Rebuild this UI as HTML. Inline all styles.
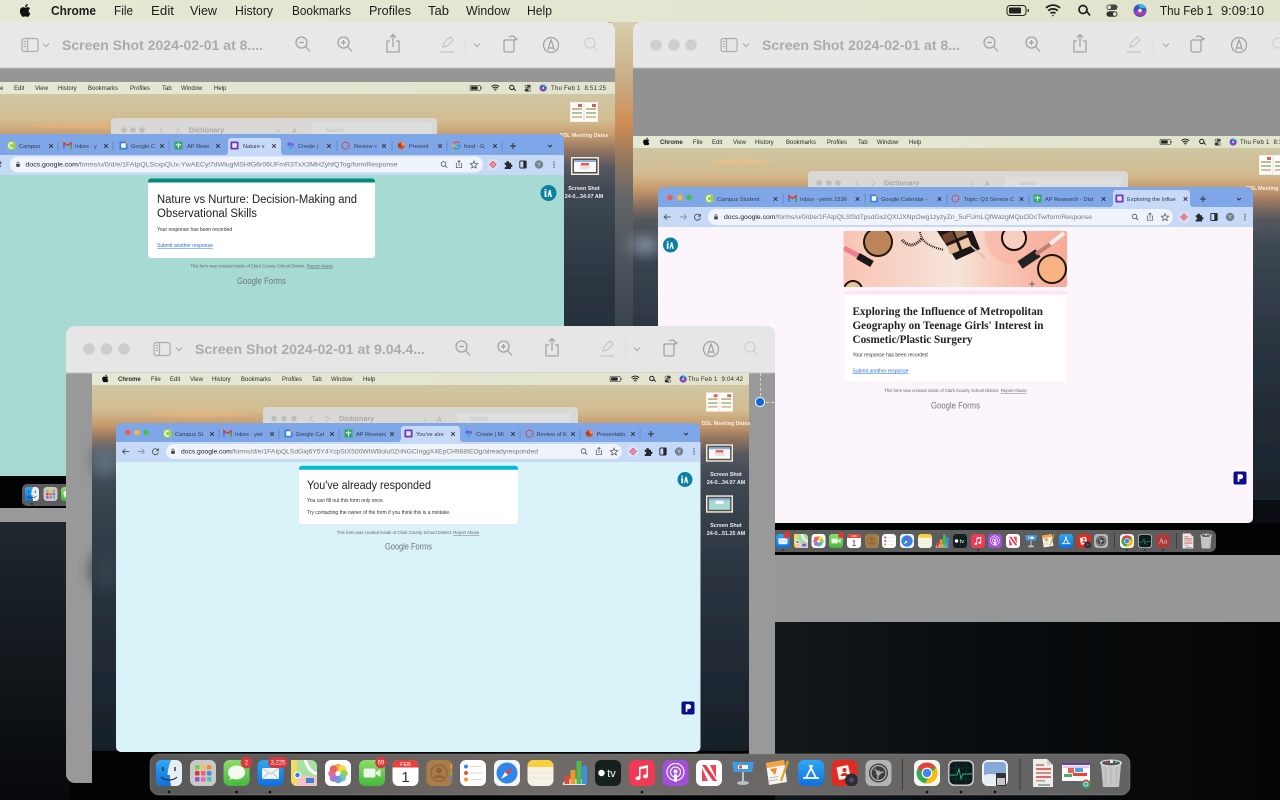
<!DOCTYPE html>
<html><head><meta charset="utf-8"><title>Screen</title>
<style>
html,body{margin:0;padding:0;background:#000;width:1280px;height:800px;overflow:hidden}
svg{display:block}
text{font-family:"Liberation Sans",Arial,sans-serif;white-space:pre}
.mb{font-size:13px;fill:#1d1d1b}
.pt{font-size:14px;font-weight:700;fill:#ababab}
.m{font-size:6px;fill:#2b2b2b}
.tb{font-size:5.7px;fill:#2e3b52}
.u{font-size:6.2px;fill:#777}
.ud{fill:#222}
.lbl{font-size:5.400px;font-weight:700;fill:#eee;text-anchor:middle}
.d{font-size:7.200px;font-weight:700;fill:#a8a8a4}
.p{font-size:5px;fill:#333}
.ft{font-size:4.300px;fill:#666;text-anchor:middle}
.gf{font-size:9.2px;fill:#70757a;text-anchor:middle}
.lnk{font-size:5px;fill:#2a6fe0;text-decoration:underline}
.bd{font-size:6px;fill:#fff;text-anchor:middle}
</style></head>
<body>
<svg width="1280" height="800" viewBox="0 0 1280 800" xmlns="http://www.w3.org/2000/svg">
<defs>
<filter id="b" x="-2%" y="-2%" width="104%" height="104%"><feGaussianBlur stdDeviation=".28"/></filter>
<filter id="bb" x="-50%" y="-50%" width="200%" height="200%"><feGaussianBlur stdDeviation="7"/></filter>
<linearGradient id="wp" x1="0" y1="0" x2="0" y2="1">
<stop offset="0" stop-color="#cfc7a3"/><stop offset=".07" stop-color="#d2bb90"/><stop offset=".11" stop-color="#c69a6b"/><stop offset=".15" stop-color="#8e7260"/><stop offset=".19" stop-color="#56585e"/><stop offset=".26" stop-color="#3e4853"/><stop offset=".5" stop-color="#2b3540"/><stop offset="1" stop-color="#171f27"/>
</linearGradient>
<linearGradient id="sl" x1="0" y1="22" x2="0" y2="326" gradientUnits="userSpaceOnUse">
<stop offset="0" stop-color="#d8cfad"/><stop offset=".2" stop-color="#c8ab82"/><stop offset=".33" stop-color="#d28e55"/><stop offset=".45" stop-color="#95785f"/><stop offset=".58" stop-color="#62656a"/><stop offset="1" stop-color="#3a444d"/>
</linearGradient>
<linearGradient id="bot" x1="0" y1="0" x2="0" y2="1"><stop offset="0" stop-color="#1f2830"/><stop offset=".5" stop-color="#12171c"/><stop offset="1" stop-color="#07090b"/></linearGradient>
<linearGradient id="low" x1="0" y1="0" x2="1" y2="0"><stop offset="0" stop-color="#12181b"/><stop offset=".35" stop-color="#0a0e10"/><stop offset="1" stop-color="#040506"/></linearGradient>
<linearGradient id="mbg" x1="0" y1="0" x2="1" y2="0"><stop offset="0" stop-color="#e5e8d4"/><stop offset="1" stop-color="#e1e3cc"/></linearGradient>
<linearGradient id="dk" x1="0" y1="0" x2="1" y2="0"><stop offset="0" stop-color="#585858"/><stop offset=".4" stop-color="#6e6a67"/><stop offset="1" stop-color="#636363"/></linearGradient>
<linearGradient id="blu" x1="0" y1="0" x2="0" y2="1"><stop offset="0" stop-color="#2ea8f5"/><stop offset="1" stop-color="#0f6fe0"/></linearGradient>
<linearGradient id="grn" x1="0" y1="0" x2="0" y2="1"><stop offset="0" stop-color="#8fdc6a"/><stop offset="1" stop-color="#45b83c"/></linearGradient>
<linearGradient id="bn" x1="0" y1="0" x2="1" y2="0"><stop offset="0" stop-color="#f8c4b3"/><stop offset=".5" stop-color="#f6e4da"/><stop offset=".7" stop-color="#f8c8b8"/><stop offset="1" stop-color="#f9a996"/></linearGradient>
<clipPath id="bnc"><rect x="843.5" y="231" width="223.5" height="56" rx="2"/></clipPath>

<symbol id="apple" viewBox="0 0 24 24"><path fill="#111" d="M17.05 12.54c-.03-2.6 2.12-3.85 2.22-3.91-1.21-1.77-3.09-2.01-3.76-2.04-1.6-.16-3.12.94-3.93.94-.81 0-2.06-.92-3.39-.89-1.74.03-3.35 1.01-4.25 2.57-1.81 3.14-.46 7.79 1.3 10.34.86 1.25 1.89 2.65 3.24 2.6 1.3-.05 1.79-.84 3.36-.84 1.57 0 2.01.84 3.38.81 1.4-.02 2.28-1.27 3.13-2.53.99-1.45 1.39-2.85 1.42-2.93-.03-.01-2.7-1.04-2.72-4.12zM14.5 4.9c.72-.87 1.2-2.08 1.07-3.29-1.03.04-2.28.69-3.02 1.55-.66.77-1.24 2-1.09 3.18 1.15.09 2.33-.58 3.04-1.44z"/></symbol>

<!-- preview toolbar icons, centred on 0,0 -->
<g id="p-side" fill="none" stroke="#adadad" stroke-width="1.2"><rect x="-8" y="-6.5" width="16" height="13" rx="2"/><path d="M-2.5-6.5v13M-6.3-3.5h2.2M-6.3-1h2.2M-6.3 1.5h2.2"/></g>
<path id="p-chev" d="M-3-1.5l3 3 3-3" fill="none" stroke="#adadad" stroke-width="1.2"/>
<g id="p-zo" fill="none" stroke="#a4a4a4" stroke-width="1.3"><circle cx="-1.5" cy="-1.5" r="5.5"/><path d="M2.5 2.5l4.5 5M-4-1.5h5"/></g>
<g id="p-zi" fill="none" stroke="#a4a4a4" stroke-width="1.3"><circle cx="-1.5" cy="-1.5" r="5.5"/><path d="M2.5 2.5l4.5 5M-4-1.5h5M-1.5-4v5"/></g>
<g id="p-share" fill="none" stroke="#a4a4a4" stroke-width="1.3"><path d="M-3-3h-3v11H6V-3H3M0 3V-9M-3-6.5l3-3 3 3"/></g>
<g id="p-pen" fill="none" stroke="#c6c6c6" stroke-width="1.2"><path d="M-4 3l1-4 6-6 3 3-6 6zM-7 8H7"/></g>
<g id="p-rot" fill="none" stroke="#a4a4a4" stroke-width="1.3"><rect x="-6" y="-4" width="10" height="12" rx="1.5"/><path d="M-1-7c3-2 6-1 7 3M6-4l-2-.5M6-4l1.500-1.800"/></g>
<g id="p-mk" fill="none" stroke="#a4a4a4" stroke-width="1.3"><circle r="7.5"/><path d="M-3 5l1.500-6L0-5l1.500 4L3 5M-2 3h4"/></g>
<g id="p-s" fill="none" stroke="#d0d0d0" stroke-width="1.3"><circle cx="-1" cy="-1" r="5"/><path d="M2.500 2.500l4 4.500"/></g>

<!-- status icons -->
<g id="mr">
<rect x="0" y="-5" width="19" height="10" rx="3" fill="none" stroke="#222" stroke-width="1"/><rect x="2" y="-3" width="12" height="6" rx="1" fill="#222"/><rect x="20.500" y="-1.500" width="1.500" height="3" fill="#444"/>
<g transform="translate(46,0)" fill="none" stroke="#1c1c1c" stroke-width="1.700"><path d="M-7-2.500c4-3.800 10-3.800 14 0M-4.700.2c2.700-2.400 6.700-2.400 9.400 0M-2.500 2.800c1.300-1.100 3.700-1.100 5 0"/><circle cy="5" r=".8" fill="#1c1c1c" stroke="none"/></g>
<g transform="translate(77,0)" fill="none" stroke="#1c1c1c" stroke-width="1.700"><circle cx="-1" cy="-1" r="4"/><path d="M2-.1L6 5" transform="translate(0,0)"/></g>
<g transform="translate(105,0)"><rect x="-5.500" y="-6" width="11" height="5.500" rx="2.700" fill="#444"/><circle cx="-2.800" cy="-3.300" r="1.800" fill="#e5e6d2"/><rect x="-5.500" y=".8" width="11" height="5.500" rx="2.700" fill="#333"/><circle cx="2.800" cy="3.500" r="1.800" fill="#e5e6d2"/></g>
<g transform="translate(133,0)"><circle r="6.500" fill="#3a54c8"/><path d="M-6 1a6.500 6.500 0 0 0 12 0c-3-2-5 2-6 1s-3-3-6-1z" fill="#c0399f"/><path d="M-2-6a6.500 6.500 0 0 1 8 4c-3-1-6 1-8-4z" fill="#29c0d6"/><circle r="1.800" fill="#eef"/></g>
</g>

<!-- chrome right toolbar -->
<g id="tbr">
<g fill="none" stroke="#4d5158" stroke-width=".8"><circle cx="-.5" cy="-.5" r="2.300"/><path d="M1 1l2.200 2.200"/></g>
<path transform="translate(15,0)" d="M-2-1h-.7v4.200h5.400V-1H2M0 1.500v-5M-1.500-2.500L0-4l1.500 1.500" fill="none" stroke="#4d5158" stroke-width=".7"/>
<path transform="translate(30,0)" d="M0-3.500l1 2.500 2.700.2-2 1.700.6 2.600L0 2.200l-2.300 1.300.6-2.600-2-1.700L-1-1z" fill="none" stroke="#4d5158" stroke-width=".7"/>
<g transform="translate(49,0)"><circle r="6" fill="#d3e0f7"/><path d="M-3 0L0-3l3 3-3 3z" fill="none" stroke="#ee4f5b" stroke-width="1.100"/><circle r="1" fill="#ee4f5b"/></g>
<path transform="translate(64,0)" d="M-3.300-1.800h1.700c-.4-2.200 3-2.200 2.600 0h2v1.900c2-.4 2 2.800 0 2.400v2h-6.300V2.700c2 .4 2-2.800 0-2.400z" fill="#26292e"/>
<g transform="translate(79,0)"><rect x="-3.200" y="-3.500" width="6.400" height="7" rx=".7" fill="none" stroke="#26292e" stroke-width=".9"/><rect x=".3" y="-3.500" width="2.900" height="7" fill="#26292e"/></g>
<circle cx="95" r="4.200" fill="#74838e"/><text x="95" y="1.800" font-size="5" fill="#e4e8ea" text-anchor="middle">Y</text>
<g fill="#4d5158"><circle cx="110" cy="-2.500" r=".75"/><circle cx="110" cy="0" r=".75"/><circle cx="110" cy="2.500" r=".75"/></g>
</g>
<g id="back"><path d="M3.200 0h-6.400M-.7-2.700L-3.400 0-.7 2.700" fill="none" stroke="#4f5660" stroke-width=".9"/></g>
<g id="fwd"><path d="M-3.200 0h6.400M.7-2.700L3.400 0 .7 2.700" fill="none" stroke="#8a94a3" stroke-width=".9"/></g>
<g id="rel"><path d="M2.700-1a3 3 0 1 0 .2 1.800M2.900-3.200v2.400H.5" fill="none" stroke="#4f5660" stroke-width=".9"/></g>
<g id="lk"><rect x="-1.800" y="-.6" width="3.600" height="3" rx=".4" fill="#444"/><path d="M-1-.6v-1a1 1 0 0 1 2 0v1" fill="none" stroke="#444" stroke-width=".6"/></g>
<path id="cl" d="M-1.800-1.800l3.600 3.600M1.800-1.800l-3.600 3.600" stroke="#2c2f36" stroke-width=".9" fill="none"/>
<path id="plus" d="M-3 0h6M0-3v6" stroke="#2c2f36" stroke-width="1" fill="none"/>
<path id="chv" d="M-2-1l2 2 2-2" stroke="#2c2f36" stroke-width=".9" fill="none"/>

<!-- favicons -->
<symbol id="f-cam" viewBox="0 0 10 10"><rect x=".5" y=".5" width="9" height="9" rx="1.500" fill="#9ad24a"/><path d="M6.500 2.300A3 3 0 1 0 6.500 7.700" fill="none" stroke="#fff" stroke-width="1.500"/></symbol>
<symbol id="f-gm" viewBox="0 0 10 10"><path d="M1 8.500V2l4 3 4-3v6.500" fill="none" stroke="#e0392b" stroke-width="1.600"/><path d="M1 8.500V4" stroke="#3f7fe8" stroke-width="1.800"/><path d="M9 8.500V4" stroke="#35a853" stroke-width="1.800"/></symbol>
<symbol id="f-cal" viewBox="0 0 10 10"><rect x=".5" y=".5" width="9" height="9" rx="1" fill="#3b7fe6"/><rect x="2.500" y="2.500" width="5" height="5" fill="#fff"/><rect x="7.500" y=".5" width="2" height="2" fill="#f4b400"/><rect x=".5" y="7.500" width="2" height="2" fill="#34a853"/></symbol>
<symbol id="f-sh" viewBox="0 0 10 10"><rect x=".5" y=".5" width="9" height="9" rx="1" fill="#2fa862"/><path d="M5 2v6M2 4.300h6" stroke="#fff" stroke-width="1.200"/></symbol>
<symbol id="f-fm" viewBox="0 0 10 10"><rect x=".5" y=".5" width="9" height="9" rx="1" fill="#6a3ab8"/><rect x="2.500" y="2.500" width="5" height="5" fill="#e9e2f8"/></symbol>
<symbol id="f-cr" viewBox="0 0 10 10"><circle cx="3.500" cy="3.500" r="2" fill="#4d6ee0"/><circle cx="6.800" cy="4" r="2" fill="#a34cd6"/><circle cx="5" cy="6.800" r="2.300" fill="#3bb0d8"/></symbol>
<symbol id="f-rv" viewBox="0 0 10 10"><circle cx="5" cy="5" r="3.800" fill="none" stroke="#d6393f" stroke-width="1.300" stroke-dasharray="1.800 .8"/></symbol>
<symbol id="f-pp" viewBox="0 0 10 10"><circle cx="5" cy="5" r="4" fill="#d8502a"/><path d="M5 1v4h4a4 4 0 0 0-4-4z" fill="#f29a66"/><rect x="1" y="3" width="4.200" height="4" fill="#b73a1a"/></symbol>
<symbol id="f-g" viewBox="0 0 10 10"><path d="M8.300 2.500A4.200 4.200 0 0 0 1.700 3" fill="none" stroke="#e94235" stroke-width="1.400"/><path d="M1.700 3a4.200 4.200 0 0 0 0 4" fill="none" stroke="#f9ba00" stroke-width="1.400"/><path d="M1.700 7a4.200 4.200 0 0 0 6.800.4" fill="none" stroke="#34a853" stroke-width="1.400"/><path d="M8.500 7.400C9 6.700 9.200 5.800 9.200 5H5" fill="none" stroke="#4285f4" stroke-width="1.400"/></symbol>
<symbol id="ia" viewBox="0 0 16 16"><circle cx="8" cy="8" r="8" fill="#0e7fa0"/><path d="M4 12V6h2v6zM7 12l1.500-7h1.500L11.500 12h-1.700l-.3-2h-1l-.3 2zM4 4h2v1.200H4z" fill="#e7f5f9"/></symbol>
<symbol id="pk" viewBox="0 0 14 14"><rect width="14" height="14" rx="2" fill="#0a0d8c"/><path d="M4.500 11V3h3.300a2.600 2.600 0 0 1 0 5.200H6.300V11z" fill="#fff"/></symbol>

<!-- dock icons -->
<symbol id="d-fin" viewBox="0 0 26 26"><rect width="26" height="26" rx="6" fill="#e8eef4"/><path d="M6 0h9c-2 5-3 9-3.500 15H14c0 4 .3 7 1 11H6a6 6 0 0 1-6-6V6a6 6 0 0 1 6-6z" fill="url(#blu)"/><path d="M5 17c4 4 12 4 16 0" fill="none" stroke="#222" stroke-width="1"/><path d="M7 7v4M19 7v4" stroke="#222" stroke-width="1.300"/></symbol>
<symbol id="d-lp" viewBox="0 0 26 26"><rect width="26" height="26" rx="6" fill="#c9c9c6"/><g><rect x="5" y="5" width="4.500" height="4.500" rx="1" fill="#6fcf5d"/><rect x="11" y="5" width="4.500" height="4.500" rx="1" fill="#f6c343"/><rect x="17" y="5" width="4.500" height="4.500" rx="1" fill="#ee8c3a"/><rect x="5" y="11" width="4.500" height="4.500" rx="1" fill="#d8343a"/><rect x="11" y="11" width="4.500" height="4.500" rx="1" fill="#ec5f6e"/><rect x="17" y="11" width="4.500" height="4.500" rx="1" fill="#3f8de0"/><rect x="5" y="17" width="4.500" height="4.500" rx="1" fill="#8e5bd8"/><rect x="11" y="17" width="4.500" height="4.500" rx="1" fill="#e06bb4"/><rect x="17" y="17" width="4.500" height="4.500" rx="1" fill="#47c7b5"/></g></symbol>
<symbol id="d-msg" viewBox="0 0 26 26"><rect width="26" height="26" rx="6" fill="url(#grn)"/><ellipse cx="13" cy="12.500" rx="8.500" ry="7" fill="#f2f9ef"/><path d="M7 16l-1 4 4-2z" fill="#f2f9ef"/></symbol>
<symbol id="d-mail" viewBox="0 0 26 26"><rect width="26" height="26" rx="6" fill="url(#blu)"/><rect x="4.500" y="8" width="17" height="11" rx="1" fill="#eef3f8"/><path d="M4.500 8l8.500 6 8.500-6M4.500 19l6-6M21.500 19l-6-6" fill="none" stroke="#a8b4c0" stroke-width=".7"/></symbol>
<symbol id="d-map" viewBox="0 0 26 26"><rect width="26" height="26" rx="6" fill="#a9dfa0"/><path d="M0 0h6v26H6a6 6 0 0 1-6-6z" fill="#f6d760"/><path d="M14 0c3 8 6 12 12 14" fill="none" stroke="#fff" stroke-width="3"/><path d="M6 16c6-2 12 2 20 0v10H6z" fill="#f4c4c0"/><circle cx="6.500" cy="15" r="3.500" fill="#fff"/><circle cx="6.500" cy="15" r="2.300" fill="#2f7ee6"/><rect x="15" y="18" width="8" height="5" fill="#3d7fe0"/></symbol>
<symbol id="d-ph" viewBox="0 0 26 26"><rect width="26" height="26" rx="6" fill="#fff"/><g opacity=".85"><circle cx="13" cy="7.500" r="3.800" fill="#f4a21d"/><circle cx="17.500" cy="9" r="3.800" fill="#f6d21f"/><circle cx="19" cy="13.500" r="3.800" fill="#8fc93a"/><circle cx="17" cy="18" r="3.800" fill="#4bc0a8"/><circle cx="13" cy="19.500" r="3.800" fill="#4a8ee0"/><circle cx="8.500" cy="18" r="3.800" fill="#8b63d0"/><circle cx="7" cy="13.500" r="3.800" fill="#d2569a"/><circle cx="8.500" cy="9" r="3.800" fill="#e64a3a"/></g></symbol>
<symbol id="d-ft" viewBox="0 0 26 26"><rect width="26" height="26" rx="6" fill="url(#grn)"/><rect x="4.500" y="8.500" width="12" height="9" rx="2" fill="#eef8ea"/><path d="M17 12l4.500-3v8L17 14z" fill="#eef8ea"/></symbol>
<symbol id="d-cal" viewBox="0 0 26 26"><rect width="26" height="26" rx="6" fill="#fff"/><path d="M6 0h14a6 6 0 0 1 6 6v1.500H0V6a6 6 0 0 1 6-6z" fill="#e9413a"/><text x="13" y="6" font-size="5.500" fill="#fff" text-anchor="middle">FEB</text><text x="13" y="22" font-size="15" fill="#333" text-anchor="middle">1</text></symbol>
<symbol id="d-con" viewBox="0 0 26 26"><rect width="26" height="26" rx="6" fill="#a97c49"/><rect x="24" y="4" width="1.500" height="5" fill="#e9a13a"/><rect x="24" y="10" width="1.500" height="5" fill="#6db84a"/><rect x="24" y="16" width="1.500" height="5" fill="#3f8de0"/><circle cx="12.500" cy="13" r="8" fill="none" stroke="#8b633a" stroke-width="1.200"/><circle cx="12.500" cy="10.500" r="3" fill="#8b633a"/><path d="M7 18c1-4 10-4 11 0" fill="#8b633a"/></symbol>
<symbol id="d-rem" viewBox="0 0 26 26"><rect width="26" height="26" rx="6" fill="#fff"/><circle cx="6" cy="6.500" r="2" fill="#3d85e6"/><circle cx="6" cy="13" r="2" fill="#e8533f"/><circle cx="6" cy="19.500" r="2" fill="#f09a2e"/><path d="M10 6.500h12M10 13h12M10 19.500h12" stroke="#d0d0d0" stroke-width=".8"/></symbol>
<symbol id="d-saf" viewBox="0 0 26 26"><rect width="26" height="26" rx="6" fill="#f4f4f4"/><circle cx="13" cy="13" r="10.500" fill="#2f86ea"/><path d="M19 7l-8 5 3 3z" fill="#e9413a"/><path d="M7 19l4-7 3 3z" fill="#fff"/></symbol>
<symbol id="d-not" viewBox="0 0 26 26"><rect width="26" height="26" rx="6" fill="#f6f3e6"/><path d="M6 0h14a6 6 0 0 1 6 6v1H0V6a6 6 0 0 1 6-6z" fill="#f9cf3b"/><path d="M0 13h26M0 18h26" stroke="#e2ded0" stroke-width=".6"/></symbol>
<symbol id="d-num" viewBox="0 0 26 26"><path d="M1 24l3-5h20v6H2z" fill="#e4e8ea"/><rect x="3" y="16" width="5" height="8" fill="#e0483c"/><rect x="9" y="10" width="5" height="14" fill="#e99a2f"/><rect x="15" y="1" width="5" height="23" fill="#4dbb52"/><rect x="20.500" y="6" width="5" height="18" fill="#3d8fe6"/></symbol>
<symbol id="d-tv" viewBox="0 0 26 26"><rect width="26" height="26" rx="6" fill="#16201f"/><text x="16.500" y="17" font-size="11" fill="#fff" text-anchor="middle">tv</text><circle cx="6.500" cy="13" r="3.200" fill="#fff"/></symbol>
<symbol id="d-mus" viewBox="0 0 26 26"><rect width="26" height="26" rx="6" fill="#f03a55"/><path d="M10 7l9-2v11.500a2.500 2 0 1 1-1.500-2V8l-6 1.300v9.200a2.500 2 0 1 1-1.500-2z" fill="#fff"/></symbol>
<symbol id="d-pod" viewBox="0 0 26 26"><rect width="26" height="26" rx="6" fill="#a04fd8"/><circle cx="13" cy="12" r="8.500" fill="none" stroke="#f2e6fb" stroke-width="1.300"/><circle cx="13" cy="12" r="5" fill="none" stroke="#f2e6fb" stroke-width="1.300"/><circle cx="13" cy="11.500" r="2" fill="#fff"/><rect x="11.500" y="14" width="3" height="8" rx="1.400" fill="#fff"/></symbol>
<symbol id="d-new" viewBox="0 0 26 26"><rect width="26" height="26" rx="6" fill="#fff"/><path d="M6 5h4l11 16h-4l-11-16z" fill="#ee3a4f"/><path d="M6 8v13h6zM20 18V5h-6z" fill="#ee3a4f" opacity=".95"/></symbol>
<symbol id="d-key" viewBox="0 0 26 26"><path d="M2 2h22l-2 10H4z" fill="#3d9ce8"/><rect x="8" y="5" width="10" height="4" fill="#fff"/><rect x="9" y="5.500" width="3" height="3" fill="#e8543a"/><rect x="12" y="12" width="2" height="10" fill="#bcc4c8"/><ellipse cx="13" cy="23" rx="6" ry="2" fill="#b4c0c8"/></symbol>
<symbol id="d-pag" viewBox="0 0 26 26"><path d="M2 3l18-3 3 22-18 3z" fill="#f7f5ee"/><path d="M2 3l18-3 .8 5-18 3z" fill="#f4a340"/><path d="M6 9l7-1-2 7z" fill="#e8872f"/><path d="M17 21L24 1" stroke="#dfa12f" stroke-width="2.200"/><path d="M5 18l9-1.500M5 21l9-1.500" stroke="#aaa" stroke-width=".7"/></symbol>
<symbol id="d-app" viewBox="0 0 26 26"><rect width="26" height="26" rx="6" fill="url(#blu)"/><path d="M14.500 5L8 18M11.500 5L18 18M5 18h16" stroke="#fff" stroke-width="1.800" fill="none"/></symbol>
<symbol id="d-pb" viewBox="0 0 26 26"><rect width="26" height="26" rx="6" fill="#e02a22"/><rect x="6" y="6" width="12" height="13" rx="1" fill="#f6f1ea" transform="rotate(-12 12 12)"/><circle cx="13" cy="10" r="2" fill="#e02a22"/><path d="M9 16c1-4 7-4 8 0z" fill="#e02a22"/><circle cx="20" cy="20" r="6.500" fill="#2a2d33"/><circle cx="20" cy="20" r="3" fill="#3a4458"/><circle cx="20" cy="20" r="1.300" fill="#7a4a6a"/></symbol>
<symbol id="d-set" viewBox="0 0 26 26"><rect width="26" height="26" rx="6" fill="#b2b5b4"/><circle cx="13" cy="13" r="9.500" fill="#3a3c3d"/><circle cx="13" cy="13" r="7.500" fill="none" stroke="#a6a8a8" stroke-width="1.500"/><path d="M13 13l-4-4M13 13l5-1M13 13l-1 6" stroke="#a6a8a8" stroke-width="1.500"/><circle cx="13" cy="13" r="2.500" fill="#a6a8a8"/></symbol>
<symbol id="d-chr" viewBox="0 0 26 26"><rect width="26" height="26" rx="6" fill="#f6f6f4"/><circle cx="13" cy="13" r="10.500" fill="#34a853"/><path d="M4 7.500A10.500 10.500 0 0 1 22.100 7.800L13 7.800 9 13z" fill="#e94235"/><path d="M22.100 7.800A10.500 10.500 0 0 1 11 23.300L17 13z" fill="#fbbc04"/><circle cx="13" cy="13" r="5.400" fill="#fff"/><circle cx="13" cy="13" r="4.200" fill="#4285f4"/></symbol>
<symbol id="d-act" viewBox="0 0 26 26"><rect width="26" height="26" rx="6" fill="#c4c8c8"/><rect x="1.500" y="1.500" width="23" height="23" rx="5" fill="#0d1a1a"/><path d="M2 15h7l2-6 2 10 2-5h9" fill="none" stroke="#36b88a" stroke-width=".9"/><path d="M2 8h22M2 19h22M8 2v22M18 2v22" stroke="#15403a" stroke-width=".5"/></symbol>
<symbol id="d-pre" viewBox="0 0 26 26"><rect width="26" height="26" rx="6" fill="#f1f4f6"/><rect x="2" y="2" width="22" height="22" rx="3" fill="#87a9d9"/><path d="M2 15c5-2 12-1 22 2v7H2z" fill="#e7eef3"/><rect x="14" y="13" width="10" height="13" rx="1" fill="#333"/><rect x="15" y="18" width="8" height="7" fill="#c9c9c9"/></symbol>
<symbol id="d-dic" viewBox="0 0 26 26"><rect width="26" height="26" rx="6" fill="#a83b3b"/><text x="13" y="18" font-size="13" fill="#eecfc7" text-anchor="middle" style="font-family:'Liberation Serif',serif">Aa</text></symbol>
<symbol id="d-doc" viewBox="0 0 26 30"><path d="M3 1h14l6 6v22H3z" fill="#efeceb"/><path d="M17 1v6h6z" fill="#cfcfcf"/><rect x="6" y="6" width="8" height="2" fill="#c48b88"/><rect x="6" y="10" width="15" height="2" fill="#d46a63"/><rect x="6" y="14" width="15" height="2" fill="#d48b85"/><rect x="6" y="18" width="15" height="2" fill="#d46a63"/><rect x="6" y="22" width="9" height="1.500" fill="#b99"/><rect x="8" y="26" width="12" height="2" fill="#9aa"/></symbol>
<symbol id="d-thg" viewBox="0 0 30 30"><rect x="1" y="4" width="28" height="18" fill="#fafafa"/><rect x="1" y="4" width="28" height="2" fill="#6a3ab8"/><rect x="7" y="9" width="6" height="5" fill="#ec5f4e"/><rect x="14" y="9" width="8" height="4" fill="#4aa3d8"/><rect x="3" y="15" width="8" height="3" fill="#45b060"/><rect x="12" y="14" width="14" height="3" fill="#e94235"/><path d="M2 8h26" stroke="#9c7ad8" stroke-width=".8"/><circle cx="25" cy="25" r="4.500" fill="#34a853"/><path d="M21.500 22.500A4.500 4.500 0 0 1 29 23.500h-4z" fill="#e94235"/><circle cx="25" cy="25" r="2" fill="#4285f4" stroke="#fff" stroke-width=".7"/></symbol>
<symbol id="d-tr" viewBox="0 0 26 30"><path d="M3 6h20l-2 23H5z" fill="#c6c8c8"/><path d="M7 8l1 20M13 8v20M19 8l-1 20" stroke="#aeb0b0" stroke-width=".8"/><ellipse cx="13" cy="5" rx="11" ry="3.500" fill="#dfe0e0"/><ellipse cx="13" cy="5" rx="9" ry="2.500" fill="#555"/><rect x="7" y="3" width="3" height="2" fill="#c34"/><rect x="12" y="2.500" width="3" height="2.500" fill="#eee"/><rect x="17" y="3" width="3" height="2" fill="#59b"/></symbol>

<!-- desktop thumbs -->
<symbol id="th-dsl" viewBox="0 0 28 20"><rect width="28" height="20" fill="#f2efe6"/><rect x="1" y="1" width="12" height="18" fill="#fff"/><rect x="15" y="1" width="12" height="18" fill="#fff"/><g fill="#d86060"><rect x="8" y="2" width="4" height="3"/><rect x="22" y="2" width="4" height="3"/></g><g fill="#c8b78a"><rect x="2" y="6" width="10" height="2"/><rect x="16" y="6" width="10" height="2"/></g><g fill="#a8c898"><rect x="2" y="10" width="10" height="2"/><rect x="16" y="10" width="10" height="2"/></g><g fill="#e6b9a0"><rect x="2" y="14" width="10" height="2"/><rect x="16" y="14" width="10" height="2"/></g></symbol>
<symbol id="th-a" viewBox="0 0 28 18"><rect width="28" height="18" fill="#efeadc"/><rect x="1.500" y="1.500" width="25" height="15" fill="#56504a"/><rect x="3" y="3" width="22" height="2" fill="#8eb0e8"/><rect x="3" y="5" width="22" height="10" fill="#f7f7f7"/><rect x="10" y="6" width="8" height="2.500" fill="#e85a4a"/><rect x="9" y="9" width="10" height="3" fill="#e4e4e4"/></symbol>
<symbol id="th-b" viewBox="0 0 28 18"><rect width="28" height="18" fill="#efeadc"/><rect x="1.500" y="1.500" width="25" height="15" fill="#56504a"/><rect x="3" y="3" width="22" height="2" fill="#8eb0e8"/><rect x="3" y="5" width="22" height="10" fill="#a6dad3"/><rect x="10" y="5.500" width="8" height="3.500" fill="#f8f8f8"/></symbol>
</defs>

<!-- background -->
<rect width="1280" height="800" fill="#020303"/>
<rect x="0" y="520" width="70" height="280" fill="url(#bot)"/>
<rect x="775" y="622" width="505" height="178" fill="url(#low)"/>
<rect x="610" y="20" width="30" height="310" fill="url(#sl)"/>

<!-- WINDOW 1 -->
<rect x="-10" y="22" width="625" height="500" rx="8" fill="#969696"/>
<path d="M0 22h607a8 8 0 0 1 8 8v38H0z" fill="#e8e8e8"/>
<rect x="0" y="67.500" width="615" height="1" fill="#bdbdbd"/>
<g filter="url(#b)">
<rect x="0" y="94" width="615" height="382" fill="url(#wp)"/>
<ellipse cx="90" cy="126" rx="60" ry="3" fill="#e9b27a" opacity=".6"/>
<rect x="0" y="82" width="615" height="12" fill="url(#mbg)"/>
<g class="m"><text x="0" y="90">e</text><text x="14" y="90">Edit</text><text x="35" y="90">View</text><text x="58" y="90">History</text><text x="88" y="90">Bookmarks</text><text x="130" y="90">Profiles</text><text x="162" y="90">Tab</text><text x="181" y="90">Window</text><text x="214" y="90">Help</text><text x="551" y="90" textLength="55">Thu Feb 1  8:51:25</text></g>
<use href="#mr" transform="translate(470,88) scale(.55)"/>
<rect x="111" y="118" width="326" height="25" rx="4" fill="#d9d8d4"/>
<g fill="#bdbdbb"><circle cx="124" cy="130" r="2.800"/><circle cx="133" cy="130" r="2.800"/><circle cx="142" cy="130" r="2.800"/></g>
<path d="M163 127l-3 3 3 3M176 127l3 3-3 3" stroke="#bbb" fill="none" stroke-width=".8"/>
<text x="189" y="132.500" class="d">Dictionary</text><text x="277" y="132" font-size="4" fill="#aaa">A</text><text x="292" y="133" font-size="7" fill="#aaa">A</text>
<rect x="311" y="122" width="121" height="13" rx="2" fill="#dededc" stroke="#ccc" stroke-width=".5"/><text x="326" y="132" font-size="5.500" fill="#bbb">Search</text>
<use href="#th-dsl" x="570" y="102" width="28" height="20"/>
<text x="584" y="137" class="lbl">DSL Meeting Dates</text>
<use href="#th-a" x="571" y="157" width="28" height="18"/>
<text x="584" y="190" class="lbl">Screen Shot</text><text x="584" y="198" class="lbl">24-0...34.07 AM</text>

<!-- chrome 1 -->
<path d="M0 134h558a6 6 0 0 1 6 6v15H0z" fill="#7fa7e7"/>
<rect x="0" y="155" width="564" height="20" fill="#c6d9f6"/>
<rect x="0" y="175" width="564" height="301" fill="#a6dad3"/>
<path d="M225 155a3 3 0 0 0 3-3v-11a3 3 0 0 1 3-3h47a3 3 0 0 1 3 3v11a3 3 0 0 0 3 3z" fill="#c6d9f6"/>
<g stroke="#4f6ea8" stroke-width=".5"><path d="M58 141v10M113 141v10M169 141v10M337 141v10M392 141v10M447 141v10M502 141v10"/></g>
<use href="#f-cam" x="7" y="141" width="9" height="9"/><use href="#f-gm" x="63" y="141" width="9" height="9"/><use href="#f-cal" x="119" y="141" width="9" height="9"/><use href="#f-sh" x="174" y="141" width="9" height="9"/><use href="#f-fm" x="230" y="141" width="9" height="9"/><use href="#f-cr" x="286" y="141" width="9" height="9"/><use href="#f-rv" x="341" y="141" width="9" height="9"/><use href="#f-pp" x="397" y="141" width="9" height="9"/><use href="#f-g" x="452" y="141" width="9" height="9"/>
<g class="tb"><text x="19" y="148">Campus</text><text x="75" y="148">Inbox - y</text><text x="131" y="148">Google C</text><text x="187" y="148">AP Rese</text><text x="243" y="148">Nature v</text><text x="298" y="148">Create |</text><text x="354" y="148">Review c</text><text x="409" y="148">Present</text><text x="464" y="148">food - G</text></g>
<use href="#cl" x="51" y="146"/><use href="#cl" x="106" y="146"/><use href="#cl" x="162" y="146"/><use href="#cl" x="218" y="146"/><use href="#cl" x="274" y="146"/><use href="#cl" x="329" y="146"/><use href="#cl" x="384" y="146"/><use href="#cl" x="440" y="146"/><use href="#cl" x="495" y="146"/>
<use href="#plus" x="513" y="146"/><use href="#chv" x="550" y="146"/>
<rect x="10" y="156.500" width="473" height="16" rx="8" fill="#eef3fc"/>
<use href="#rel" x="-2" y="164.500"/><use href="#lk" x="18" y="164.500"/>
<text x="25.500" y="166.700" class="u" textLength="372" lengthAdjust="spacingAndGlyphs"><tspan class="ud">docs.google.com</tspan>/forms/u/0/d/e/1FAIpQLScxpQUx-YwAECyl7dWlugMSHfG6r06UFmR3TxX3MH2yhfQTog/formResponse</text>
<use href="#tbr" x="444" y="164.500"/>
<rect x="148" y="179" width="227" height="79" rx="3" fill="#fff"/><path d="M148 182.500v-1a3 3 0 0 1 3-3h221a3 3 0 0 1 3 3v1z" fill="#00897b"/>
<text x="157" y="203" font-size="11.500" fill="#202124" textLength="200" lengthAdjust="spacingAndGlyphs">Nature vs Nurture: Decision-Making and</text>
<text x="157" y="217" font-size="11.500" fill="#202124" textLength="100" lengthAdjust="spacingAndGlyphs">Observational Skills</text>
<text x="157" y="231" class="p">Your response has been recorded</text>
<text x="157" y="247" class="lnk">Submit another response</text>
<text x="261.500" y="267.500" class="ft">This form was created inside of Clark County School District. <tspan text-decoration="underline">Report Abuse</tspan></text>
<text x="261.500" y="284" class="gf" textLength="49" lengthAdjust="spacingAndGlyphs">Google Forms</text>
<use href="#ia" x="540.500" y="185" width="16" height="16"/>
</g>
<!-- black lower of win1 -->
<rect x="0" y="476" width="615" height="32" fill="#030303"/>
<rect x="22" y="484" width="60" height="22" rx="5" fill="#5c5c5c"/>
<use href="#d-fin" x="25" y="487" width="14" height="14"/><use href="#d-lp" x="43.500" y="487" width="14" height="14"/><use href="#d-msg" x="61" y="487" width="14" height="14"/>
<circle cx="32" cy="504" r=".8" fill="#111"/>
<rect x="0" y="508" width="615" height="14" fill="#999"/>

<!-- WINDOW 2 -->
<path d="M633 30a8 8 0 0 1 8-8h639v46H633z" fill="#e7e7e7"/>
<rect x="633" y="68" width="647" height="68" fill="#929292"/>
<rect x="633" y="67.500" width="647" height="1" fill="#bdbdbd"/>
<rect x="633" y="136" width="647" height="419" fill="#929292"/>
<rect x="633" y="555" width="647" height="67" fill="#979797"/>
<g filter="url(#b)">
<rect x="633" y="148" width="647" height="375" fill="url(#wp)"/>
<ellipse cx="645" cy="245" rx="14" ry="8" fill="#8b9aa6" filter="url(#bb)"/>
<ellipse cx="740" cy="162" rx="30" ry="3" fill="#e8c08a" opacity=".7"/>
<rect x="633" y="136" width="647" height="12" fill="url(#mbg)"/>
<use href="#apple" x="642" y="137" width="9" height="9"/>
<text x="660" y="144" class="m" font-weight="700">Chrome</text>
<g class="m"><text x="693" y="144">File</text><text x="712" y="144">Edit</text><text x="733" y="144">View</text><text x="755" y="144">History</text><text x="786" y="144">Bookmarks</text><text x="827" y="144">Profiles</text><text x="858" y="144">Tab</text><text x="877" y="144">Window</text><text x="909" y="144">Help</text><text x="1240" y="144" textLength="55">Thu Feb 1  8:34:07</text></g>
<use href="#mr" transform="translate(1160,142) scale(.55)"/>
<rect x="808" y="171" width="320" height="24" rx="4" fill="#d9d8d4"/>
<g fill="#bdbdbb"><circle cx="819" cy="183" r="2.800"/><circle cx="829" cy="183" r="2.800"/><circle cx="838" cy="183" r="2.800"/></g>
<path d="M859 180l-3 3 3 3M872 180l3 3-3 3" stroke="#bbb" fill="none" stroke-width=".8"/>
<text x="884" y="185.500" class="d">Dictionary</text><text x="971" y="185" font-size="4" fill="#aaa">A</text><text x="985" y="186" font-size="7" fill="#aaa">A</text>
<rect x="1004" y="176" width="118" height="12" rx="2" fill="#dededc" stroke="#ccc" stroke-width=".5"/><text x="1019" y="185" font-size="5.500" fill="#bbb">Search</text>
<use href="#th-dsl" x="1259" y="155" width="28" height="20"/>
<text x="1246" y="190" class="lbl" style="text-anchor:start">DSL Meeting Dates</text>

<!-- chrome 2 -->
<path d="M658 193a6 6 0 0 1 6-6h583a6 6 0 0 1 6 6v14H658z" fill="#7fa7e7"/>
<rect x="658" y="207" width="595" height="20" fill="#c6d9f6"/>
<path d="M658 227h595v291a5 5 0 0 1-5 5H663a5 5 0 0 1-5-5z" fill="#fdf5fc"/>
<circle cx="670" cy="197.500" r="2.800" fill="#f15b50"/><circle cx="680" cy="197.500" r="2.800" fill="#f5b83d"/><circle cx="689" cy="197.500" r="2.800" fill="#3fc24e"/>
<path d="M1110 207a3 3 0 0 0 3-3v-11a3 3 0 0 1 3-3h71a3 3 0 0 1 3 3v11a3 3 0 0 0 3 3z" fill="#c6d9f6"/>
<g stroke="#4f6ea8" stroke-width=".5"><path d="M783 194v10M865 194v10M947 194v10M1029 194v10"/></g>
<use href="#f-cam" x="705" y="194" width="9" height="9"/><use href="#f-gm" x="788" y="194" width="9" height="9"/><use href="#f-cal" x="869.500" y="194" width="9" height="9"/><use href="#f-rv" x="951" y="194" width="9" height="9"/><use href="#f-sh" x="1033" y="194" width="9" height="9"/><use href="#f-fm" x="1115" y="194" width="9" height="9"/>
<g class="tb"><text x="717" y="201">Campus Student</text><text x="800" y="201">Inbox - yeirin.1536</text><text x="881" y="201">Google Calendar -</text><text x="964" y="201">Topic: Q3 Service C</text><text x="1045" y="201">AP Research - Dist</text><text x="1127" y="201">Exploring the Influe</text></g>
<use href="#cl" x="775.500" y="199"/><use href="#cl" x="857.500" y="199"/><use href="#cl" x="939.500" y="199"/><use href="#cl" x="1021.500" y="199"/><use href="#cl" x="1103.500" y="199"/><use href="#cl" x="1185.500" y="199"/>
<use href="#plus" x="1203" y="199"/><use href="#chv" x="1239" y="199"/>
<use href="#back" x="667.500" y="217"/><use href="#fwd" x="683" y="217"/><use href="#rel" x="697.500" y="217"/>
<rect x="708" y="209" width="465" height="16" rx="8" fill="#eef3fc"/>
<use href="#lk" x="716" y="217"/>
<text x="724" y="219.200" class="u" textLength="368" lengthAdjust="spacingAndGlyphs"><tspan class="ud">docs.google.com</tspan>/forms/u/0/d/e/1FAIpQLSf3d7psdGx2QXtJXNpOwg1zyzyZn_5uFUmLQfWazgMQuODcTw/formResponse</text>
<use href="#tbr" x="1135" y="217"/>

<!-- banner -->
<g clip-path="url(#bnc)">
<rect x="843.500" y="231" width="223.500" height="56" fill="url(#bn)"/>
<circle cx="1013" cy="236" r="28" fill="#f9b3a3" opacity=".6"/>
<circle cx="878" cy="242" r="14" fill="#bb8558" stroke="#1b1210" stroke-width="2"/>
<path d="M844 248l26 14" stroke="#ef7f8c" stroke-width="5"/><path d="M858 256l14 8" stroke="#1c1514" stroke-width="7"/>
<circle cx="853" cy="290" r="9" fill="#eebf9e" stroke="#1b1210" stroke-width="2"/>
<path d="M902 240c6 6 12 8 20-2" fill="none" stroke="#1d1311" stroke-width="3" stroke-dasharray="1 1"/>
<path d="M920 232c2 10 8 14 24 18" fill="none" stroke="#1d1311" stroke-width="2" stroke-dasharray="1 1"/>
<path d="M937 231l34-4 9 22-24 11z" fill="#1d1715"/>
<rect x="943" y="233" width="11" height="9" fill="#6f4030" transform="rotate(-22 948 237)"/><rect x="955" y="228" width="11" height="9" fill="#9d7257" transform="rotate(-22 960 232)"/><rect x="948" y="244" width="10" height="9" fill="#e2b795" transform="rotate(-22 953 248)"/><rect x="960" y="239" width="10" height="9" fill="#ecc8a6" transform="rotate(-22 965 243)"/>
<path d="M970 245l15 13" stroke="#cfc0b8" stroke-width="1.500"/>
<circle cx="1014" cy="238" r="12" fill="#f7cfc2" stroke="#161010" stroke-width="2"/>
<path d="M1020 265l18-12" stroke="#222" stroke-width="9"/><path d="M1036 254l16-11" stroke="#c37c70" stroke-width="4"/><path d="M1050 244l14-11" stroke="#eee" stroke-width="4"/>
<circle cx="1052" cy="269" r="14" fill="#f7b183" stroke="#1b1210" stroke-width="2"/>
<path d="M1032 281v6M1029 284h6" stroke="#222" stroke-width=".6"/>
</g>
<rect x="844" y="291" width="223" height="91" rx="3" fill="#fff" stroke="#f7ecf5" stroke-width=".5"/>
<path d="M844 294.500v-.5a3 3 0 0 1 3-3h217a3 3 0 0 1 3 3v.5z" fill="#fde3f7"/>
<g style="font-family:'Liberation Serif',serif" font-weight="700" font-size="11.500" fill="#202124">
<text x="852.500" y="315" style="font-family:'Liberation Serif',serif" textLength="190.500" lengthAdjust="spacingAndGlyphs">Exploring the Influence of Metropolitan</text>
<text x="852.500" y="329" style="font-family:'Liberation Serif',serif" textLength="191" lengthAdjust="spacingAndGlyphs">Geography on Teenage Girls' Interest in</text>
<text x="852.500" y="343" style="font-family:'Liberation Serif',serif" textLength="120" lengthAdjust="spacingAndGlyphs">Cosmetic/Plastic Surgery</text></g>
<text x="852.500" y="356.500" class="p">Your response has been recorded</text>
<text x="852.500" y="372.500" class="lnk">Submit another response</text>
<text x="955.500" y="392" class="ft">This form was created inside of Clark County School District. <tspan text-decoration="underline">Report Abuse</tspan></text>
<text x="955.500" y="408.500" class="gf" textLength="49" lengthAdjust="spacingAndGlyphs">Google Forms</text>
<use href="#ia" x="663" y="237.500" width="15" height="15"/>
<use href="#pk" x="1233.500" y="471.500" width="13" height="13"/>
</g>
<rect x="633" y="523" width="647" height="32" fill="#020303"/>
<rect x="1253" y="500" width="27" height="23" fill="#0a0e12"/>
<path d="M740 530h470a6 6 0 0 1 6 6v10a6 6 0 0 1-6 6H740z" fill="#5d5d5d"/>
<g>
<use href="#d-mail" x="776" y="534" width="14" height="14"/><use href="#d-map" x="794" y="534" width="14" height="14"/><use href="#d-ph" x="811.500" y="534" width="14" height="14"/><use href="#d-ft" x="829" y="534" width="14" height="14"/><use href="#d-cal" x="847" y="534" width="14" height="14"/><use href="#d-con" x="865" y="534" width="14" height="14"/><use href="#d-rem" x="882" y="534" width="14" height="14"/><use href="#d-saf" x="900" y="534" width="14" height="14"/><use href="#d-not" x="918" y="534" width="14" height="14"/><use href="#d-num" x="935" y="534" width="14" height="14"/><use href="#d-tv" x="953" y="534" width="14" height="14"/><use href="#d-mus" x="971" y="534" width="14" height="14"/><use href="#d-pod" x="988" y="534" width="14" height="14"/><use href="#d-new" x="1006" y="534" width="14" height="14"/><use href="#d-key" x="1024" y="534" width="14" height="14"/><use href="#d-pag" x="1041" y="534" width="14" height="14"/><use href="#d-app" x="1059" y="534" width="14" height="14"/><use href="#d-pb" x="1077" y="534" width="14" height="14"/><use href="#d-set" x="1094" y="534" width="14" height="14"/>
<rect x="1114" y="533" width=".7" height="16" fill="#333"/>
<use href="#d-chr" x="1120" y="534" width="14" height="14"/><use href="#d-act" x="1138" y="534" width="14" height="14"/><use href="#d-dic" x="1156" y="534" width="14" height="14"/>
<rect x="1176" y="533" width=".7" height="16" fill="#333"/>
<use href="#d-doc" x="1181" y="533" width="14" height="16"/><use href="#d-tr" x="1199" y="533" width="14" height="16"/>
<circle cx="783" cy="550" r=".7" fill="#111"/><circle cx="978" cy="550" r=".7" fill="#111"/><circle cx="1127" cy="550" r=".7" fill="#111"/><circle cx="1145" cy="550" r=".7" fill="#111"/><circle cx="1163" cy="550" r=".7" fill="#111"/>
<circle cx="787" cy="535" r="3.500" fill="#d9393c"/><circle cx="841" cy="535" r="3" fill="#d9393c"/>
</g>

<!-- Preview toolbar 1 -->
<use href="#p-side" x="30" y="45"/><use href="#p-chev" x="46" y="45"/>
<text x="62" y="50" class="pt" textLength="201" lengthAdjust="spacingAndGlyphs">Screen Shot 2024-02-01 at 8....</text>
<use href="#p-zo" x="303" y="44"/><use href="#p-zi" x="345" y="44"/><use href="#p-share" x="393" y="44"/><use href="#p-pen" x="447" y="44"/>
<rect x="465" y="37" width=".7" height="16" fill="#d6d6d6"/><use href="#p-chev" x="477" y="45"/>
<use href="#p-rot" x="510" y="44"/><use href="#p-mk" x="551" y="45"/><use href="#p-s" x="591" y="44"/>
<!-- Preview toolbar 2 -->
<g fill="#cfcfcf"><circle cx="656" cy="45" r="5.800"/><circle cx="674" cy="45" r="5.800"/><circle cx="691" cy="45" r="5.800"/></g>
<use href="#p-side" x="729" y="45"/><use href="#p-chev" x="746" y="45"/>
<text x="762" y="50" class="pt" textLength="198" lengthAdjust="spacingAndGlyphs">Screen Shot 2024-02-01 at 8...</text>
<use href="#p-zo" x="991" y="44"/><use href="#p-zi" x="1033" y="44"/><use href="#p-share" x="1080" y="44"/><use href="#p-pen" x="1134" y="44"/>
<rect x="1153" y="37" width=".7" height="16" fill="#d6d6d6"/><use href="#p-chev" x="1166" y="45"/>
<use href="#p-rot" x="1197" y="44"/><use href="#p-mk" x="1239" y="45"/><use href="#p-s" x="1279" y="44"/>

<!-- WINDOW 3 -->
<rect x="66" y="326" width="709" height="457" rx="9" fill="#999"/>
<path d="M66 335a9 9 0 0 1 9-9h691a9 9 0 0 1 9 9v38H66z" fill="#e6e6e6"/>
<rect x="66" y="372.500" width="709" height="1" fill="#bdbdbd"/>
<g fill="#cdcdcd"><circle cx="89" cy="349" r="5.800"/><circle cx="106.500" cy="349" r="5.800"/><circle cx="124" cy="349" r="5.800"/></g>
<use href="#p-side" x="162" y="349"/><use href="#p-chev" x="179" y="349"/>
<text x="195" y="354" class="pt" textLength="230" lengthAdjust="spacingAndGlyphs">Screen Shot 2024-02-01 at 9.04.4...</text>
<use href="#p-zo" x="463" y="348"/><use href="#p-zi" x="505" y="348"/><use href="#p-share" x="552" y="348"/><use href="#p-pen" x="607" y="348"/>
<rect x="625.500" y="340" width=".7" height="16" fill="#d6d6d6"/><use href="#p-chev" x="637" y="349"/>
<use href="#p-rot" x="670" y="348"/><use href="#p-mk" x="711" y="349"/><use href="#p-s" x="751" y="348"/>
<rect x="92" y="751" width="657" height="32" fill="#030303"/>
<g filter="url(#b)">
<rect x="92" y="385" width="657" height="366" fill="url(#wp)"/>
<ellipse cx="105" cy="460" rx="14" ry="16" fill="#5f6f7c" filter="url(#bb)"/>
<ellipse cx="105" cy="570" rx="14" ry="20" fill="#34414c" filter="url(#bb)"/>
<ellipse cx="200" cy="414" rx="50" ry="3" fill="#e7b582" opacity=".6"/>
<rect x="92" y="373" width="657" height="12" fill="url(#mbg)"/>
<use href="#apple" x="101" y="374" width="9" height="9"/>
<text x="118" y="381" class="m" font-weight="700">Chrome</text>
<g class="m"><text x="151" y="381">File</text><text x="170" y="381">Edit</text><text x="190" y="381">View</text><text x="212" y="381">History</text><text x="241" y="381">Bookmarks</text><text x="282" y="381">Profiles</text><text x="312" y="381">Tab</text><text x="331" y="381">Window</text><text x="363" y="381">Help</text><text x="688" y="381" textLength="55">Thu Feb 1  9:04:42</text></g>
<use href="#mr" transform="translate(610,379) scale(.55)"/>
<rect x="263" y="407" width="315" height="24" rx="4" fill="#d9d8d4"/>
<g fill="#bdbdbb"><circle cx="274" cy="418.500" r="2.800"/><circle cx="284" cy="418.500" r="2.800"/><circle cx="294" cy="418.500" r="2.800"/></g>
<path d="M313 415.500l-3 3 3 3M326 415.500l3 3-3 3" stroke="#bbb" fill="none" stroke-width=".8"/>
<text x="339" y="421" class="d">Dictionary</text><text x="424" y="421" font-size="4" fill="#aaa">A</text><text x="437" y="422" font-size="7" fill="#aaa">A</text>
<rect x="456" y="412" width="116" height="11" rx="2" fill="#dededc" stroke="#ccc" stroke-width=".5"/><text x="470" y="420.500" font-size="5.500" fill="#bbb">Search</text>
<use href="#th-dsl" x="706" y="392" width="27" height="20"/>
<text x="726" y="425" class="lbl">DSL Meeting Dates</text>
<use href="#th-a" x="706" y="444" width="27" height="18"/>
<text x="726" y="476" class="lbl">Screen Shot</text><text x="726" y="484" class="lbl">24-0...34.07 AM</text>
<use href="#th-b" x="706" y="495" width="27" height="18"/>
<text x="726" y="527" class="lbl">Screen Shot</text><text x="726" y="535" class="lbl">24-0...51.25 AM</text>

<!-- chrome 3 -->
<path d="M116 429a6 6 0 0 1 6-6h572a6 6 0 0 1 6 6v13H116z" fill="#7fa7e7"/>
<rect x="116" y="442" width="584.500" height="20" fill="#c6d9f6"/>
<path d="M116 462h584.500v285a5 5 0 0 1-5 5H121a5 5 0 0 1-5-5z" fill="#d9f3f9"/>
<circle cx="128" cy="432.500" r="2.800" fill="#f15b50"/><circle cx="137" cy="432.500" r="2.800" fill="#f5b83d"/><circle cx="146" cy="432.500" r="2.800" fill="#3fc24e"/>
<path d="M398 442a3 3 0 0 0 3-3v-10a3 3 0 0 1 3-3h53a3 3 0 0 1 3 3v10a3 3 0 0 0 3 3z" fill="#c6d9f6"/>
<g stroke="#4f6ea8" stroke-width=".5"><path d="M219 429v10M279 429v10M339 429v10M520 429v10M580 429v10M640 429v10"/></g>
<use href="#f-cam" x="163" y="429" width="9" height="9"/><use href="#f-gm" x="223" y="429" width="9" height="9"/><use href="#f-cal" x="284" y="429" width="9" height="9"/><use href="#f-sh" x="344" y="429" width="9" height="9"/><use href="#f-fm" x="404" y="429" width="9" height="9"/><use href="#f-cr" x="464" y="429" width="9" height="9"/><use href="#f-rv" x="525" y="429" width="9" height="9"/><use href="#f-pp" x="585" y="429" width="9" height="9"/>
<g class="tb"><text x="175" y="436">Campus St</text><text x="235" y="436">Inbox - yeir</text><text x="295.500" y="436">Google Cal</text><text x="356" y="436">AP Researc</text><text x="416" y="436">You've alre</text><text x="476" y="436">Create | Mi</text><text x="536.500" y="436">Review of E</text><text x="596.500" y="436">Presentatio</text></g>
<use href="#cl" x="212" y="434"/><use href="#cl" x="272" y="434"/><use href="#cl" x="332" y="434"/><use href="#cl" x="392" y="434"/><use href="#cl" x="453" y="434"/><use href="#cl" x="513" y="434"/><use href="#cl" x="573" y="434"/><use href="#cl" x="633" y="434"/>
<use href="#plus" x="651" y="434"/><use href="#chv" x="686" y="434"/>
<use href="#back" x="126" y="451.500"/><use href="#fwd" x="141" y="451.500"/><use href="#rel" x="155.500" y="451.500"/>
<rect x="166" y="444" width="456" height="15" rx="7.500" fill="#eef3fc"/>
<use href="#lk" x="173" y="451.500"/>
<text x="181" y="453.700" class="u" textLength="357" lengthAdjust="spacingAndGlyphs"><tspan class="ud">docs.google.com</tspan>/forms/d/e/1FAIpQLSdGiq6Y5Y4YcpStX500WtWBolu0ZnNGCInggX4EpCH988IEOg/alreadyresponded</text>
<use href="#tbr" x="584" y="451.500"/>
<rect x="299" y="466" width="219" height="58" rx="3" fill="#fff"/><path d="M299 469.800v-1a3 3 0 0 1 3-3h213a3 3 0 0 1 3 3v1z" fill="#00bcd4"/>
<text x="307" y="489" font-size="12" fill="#202124" textLength="124" lengthAdjust="spacingAndGlyphs">You've already responded</text>
<text x="307" y="502" class="p" textLength="77" lengthAdjust="spacingAndGlyphs">You can fill out this form only once.</text>
<text x="307" y="514" class="p" textLength="143.500" lengthAdjust="spacingAndGlyphs">Try contacting the owner of the form if you think this is a mistake.</text>
<text x="408" y="534" class="ft">This form was created inside of Clark County School District. <tspan text-decoration="underline">Report Abuse</tspan></text>
<text x="408.500" y="549.500" class="gf" textLength="47" lengthAdjust="spacingAndGlyphs">Google Forms</text>
<use href="#ia" x="677.500" y="472" width="15" height="15"/>
<use href="#pk" x="681.500" y="701.500" width="13" height="13"/>
</g>
<path d="M760.500 373v25" stroke="#eee" stroke-width=".7" stroke-dasharray="3 2"/>
<path d="M766 402.500h9" stroke="#eee" stroke-width=".7" stroke-dasharray="3 2"/>
<circle cx="760" cy="402" r="4.500" fill="#0a6ad6" stroke="#fff" stroke-width="1"/>

<!-- main dock -->
<rect x="150" y="754" width="980" height="41" rx="9" fill="url(#dk)" stroke="#8a8a8a" stroke-width=".5"/>
<use href="#d-fin" x="156" y="760" width="26" height="26"/><use href="#d-lp" x="190" y="760" width="26" height="26"/><use href="#d-msg" x="223.500" y="760" width="26" height="26"/><use href="#d-mail" x="257.500" y="760" width="26" height="26"/><use href="#d-map" x="291" y="760" width="26" height="26"/><use href="#d-ph" x="325" y="760" width="26" height="26"/><use href="#d-ft" x="359" y="760" width="26" height="26"/><use href="#d-cal" x="392.500" y="760" width="26" height="26"/><use href="#d-con" x="426.500" y="760" width="26" height="26"/><use href="#d-rem" x="460" y="760" width="26" height="26"/><use href="#d-saf" x="494" y="760" width="26" height="26"/><use href="#d-not" x="527.500" y="760" width="26" height="26"/><use href="#d-num" x="561.500" y="760" width="26" height="26"/><use href="#d-tv" x="595" y="760" width="26" height="26"/><use href="#d-mus" x="629" y="760" width="26" height="26"/><use href="#d-pod" x="662.500" y="760" width="26" height="26"/><use href="#d-new" x="696" y="760" width="26" height="26"/><use href="#d-key" x="730" y="760" width="26" height="26"/><use href="#d-pag" x="764" y="760" width="26" height="26"/><use href="#d-app" x="798" y="760" width="26" height="26"/><use href="#d-pb" x="831.500" y="760" width="26" height="26"/><use href="#d-set" x="865.500" y="760" width="26" height="26"/>
<rect x="902" y="759" width="1" height="31" fill="#3c3c3c"/>
<use href="#d-chr" x="914" y="760" width="26" height="26"/><use href="#d-act" x="948" y="760" width="26" height="26"/><use href="#d-pre" x="982" y="760" width="26" height="26"/>
<rect x="1019.500" y="759" width="1" height="31" fill="#3c3c3c"/>
<use href="#d-doc" x="1030" y="758" width="26" height="30"/><use href="#d-thg" x="1061" y="759" width="30" height="30"/><use href="#d-tr" x="1098" y="758" width="26" height="30"/>
<circle cx="169" cy="792" r="1.300" fill="#0b0b0b"/><circle cx="236.500" cy="792" r="1.300" fill="#0b0b0b"/><circle cx="270" cy="792" r="1.300" fill="#0b0b0b"/><circle cx="642" cy="792" r="1.300" fill="#0b0b0b"/><circle cx="927" cy="792" r="1.300" fill="#0b0b0b"/><circle cx="961" cy="792" r="1.300" fill="#0b0b0b"/><circle cx="995" cy="792" r="1.300" fill="#0b0b0b"/>
<circle cx="246.500" cy="762.500" r="5.800" fill="#d8393c"/><text x="246.500" y="764.700" class="bd">2</text>
<rect x="268" y="757" width="20" height="11" rx="5.500" fill="#d8393c"/><text x="278" y="764.700" class="bd" font-size="6">3,225</text>
<circle cx="381" cy="762.500" r="5.800" fill="#d8393c"/><text x="381" y="764.700" class="bd">69</text>

<!-- top menu bar -->
<rect x="0" y="0" width="1280" height="22" fill="url(#mbg)"/>
<use href="#apple" x="18" y="3" width="15" height="15"/>
<text x="51" y="15" class="mb" font-weight="700" textLength="45" lengthAdjust="spacingAndGlyphs">Chrome</text>
<g class="mb"><text x="114" y="15" textLength="19" lengthAdjust="spacingAndGlyphs">File</text><text x="151" y="15" textLength="23" lengthAdjust="spacingAndGlyphs">Edit</text><text x="190" y="15" textLength="27" lengthAdjust="spacingAndGlyphs">View</text><text x="235" y="15" textLength="38" lengthAdjust="spacingAndGlyphs">History</text><text x="292" y="15" textLength="59" lengthAdjust="spacingAndGlyphs">Bookmarks</text><text x="369" y="15" textLength="42" lengthAdjust="spacingAndGlyphs">Profiles</text><text x="428" y="15" textLength="21" lengthAdjust="spacingAndGlyphs">Tab</text><text x="466" y="15" textLength="44" lengthAdjust="spacingAndGlyphs">Window</text><text x="527" y="15" textLength="25" lengthAdjust="spacingAndGlyphs">Help</text>
<text x="1160" y="15" textLength="53" lengthAdjust="spacingAndGlyphs">Thu Feb 1</text><text x="1221" y="15" textLength="43" lengthAdjust="spacingAndGlyphs">9:09:10</text></g>
<use href="#mr" x="1007" y="10.500"/>
</svg>
</body></html>
